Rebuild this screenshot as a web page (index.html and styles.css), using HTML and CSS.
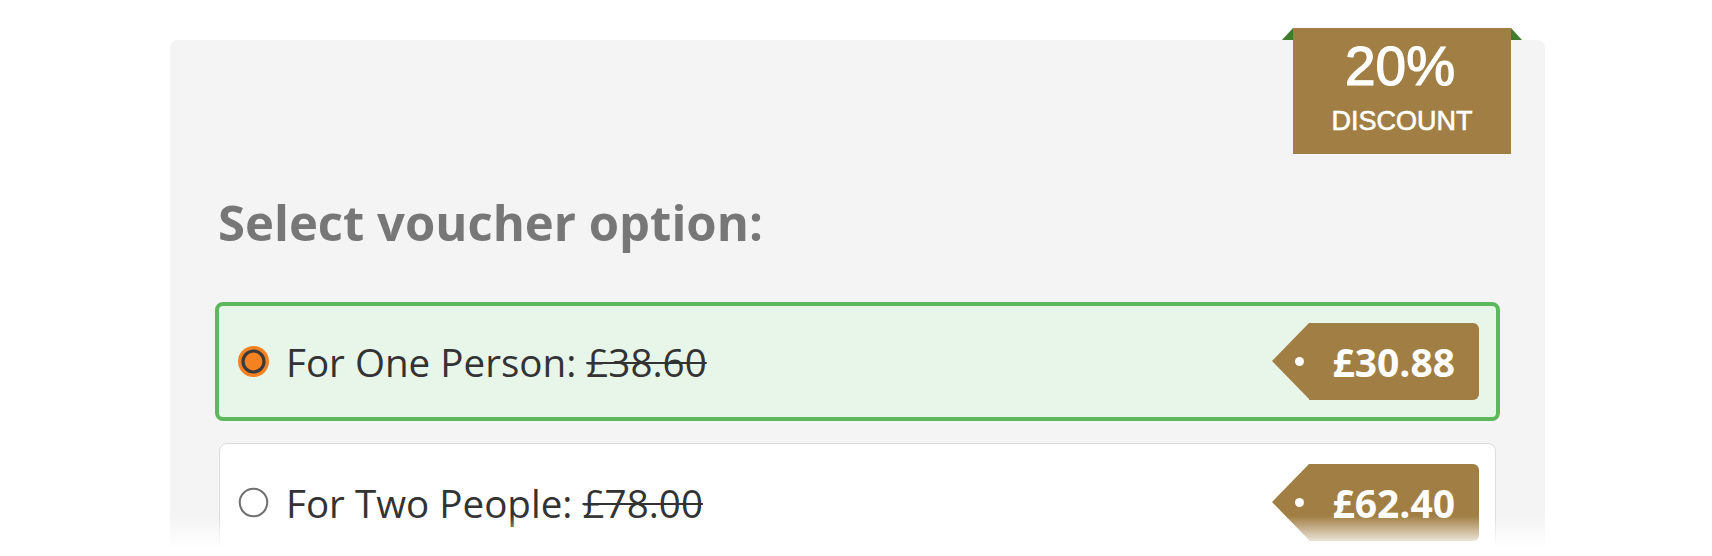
FILE: index.html
```html
<!DOCTYPE html>
<html>
<head>
<meta charset="utf-8">
<link rel="stylesheet" href="styles.css">
</head>
<body>
<div class="page">
  <div class="card">
    <div class="badge">
      <span class="badge-pct">20%</span>
      <span class="badge-label">DISCOUNT</span>
    </div>
    <h2 class="heading">Select voucher option:</h2>
    <div class="options">
      <div class="option selected">
        <svg class="radio" width="31" height="31" viewBox="0 0 31 31">
          <circle cx="15.5" cy="15.5" r="15.5" fill="#f58220"/>
          <circle cx="15.5" cy="15.5" r="10.5" fill="#f58220" stroke="#3a3a3a" stroke-width="3.2"/>
        </svg>
        <span class="label">For One Person: <s>£38.60</s></span>
        <span class="tag">£30.88</span>
      </div>
      <div class="option">
        <svg class="radio" width="31" height="31" viewBox="0 0 31 31">
          <circle cx="15.5" cy="15.5" r="13.8" fill="#fff" stroke="#707070" stroke-width="2"/>
        </svg>
        <span class="label">For Two People: <s>£78.00</s></span>
        <span class="tag">£62.40</span>
      </div>
    </div>
  </div>
  <div class="fade"></div>
</div>
</body>
</html>
```

FILE: styles.css
```css
html, body {
  margin: 0;
  padding: 0;
  background: #ffffff;
}

body {
  height: 556px;
  overflow: hidden;
}

.page {
  position: relative;
  height: 556px;
  padding: 40px 0 0 170px;
  box-sizing: border-box;
}

.card {
  position: relative;
  width: 1375px;
  height: 640px;
  background: #f4f4f4;
  border-radius: 8px;
  padding: 152px 45px 0 45px;
  box-sizing: border-box;
  font-family: "Open Sans", "DejaVu Sans", sans-serif;
}

.badge {
  position: absolute;
  top: -12px;
  right: 34px;
  width: 218px;
  height: 126px;
  background: #a17f44;
  color: #ffffff;
  font-family: "Liberation Sans", Arial, sans-serif;
  display: flex;
  flex-direction: column;
  align-items: center;
}

.badge::before,
.badge::after {
  content: "";
  position: absolute;
  top: 0;
  width: 0;
  height: 0;
  border-bottom: 12px solid #3f7d2c;
}

.badge::before {
  left: -11px;
  border-left: 11px solid transparent;
}

.badge::after {
  right: -11px;
  border-right: 11px solid transparent;
}

.badge-pct {
  font-size: 55px;
  line-height: 55px;
  margin-top: 11px;
  margin-left: -4px;
  -webkit-text-stroke: 1.2px #ffffff;
}

.badge-label {
  font-size: 27px;
  line-height: 27px;
  margin-top: 14px;
  -webkit-text-stroke: 0.6px #ffffff;
}

.heading {
  margin: 0;
  padding-left: 3px;
  font-size: 49px;
  line-height: 60px;
  font-weight: 700;
  color: #777777;
}

.options {
  margin-top: 50px;
  display: flex;
  flex-direction: column;
  gap: 22px;
}

.option {
  display: flex;
  align-items: center;
  height: 119px;
  box-sizing: border-box;
  background: #ffffff;
  border: 1px solid #dcdcdc;
  border-radius: 8px;
  margin: 0 4px;
  padding: 0 16px 0 18px;
}

.option.selected {
  background: #e8f6ea;
  border: 4px solid #5cb85c;
  margin: 0;
  padding: 0 17px 0 19px;
}

.radio {
  flex: none;
  margin-right: 17px;
}

.label {
  flex: 1;
  font-size: 38.6px;
  color: #333333;
  white-space: nowrap;
}

.label s {
  text-decoration-thickness: 2px;
}

.tag {
  position: relative;
  flex: none;
  margin-left: 37px;
  height: 77px;
  display: flex;
  align-items: center;
  padding: 0 24px 0 23px;
  background: #a17f44;
  border-radius: 0 6px 6px 0;
  color: #ffffff;
  font-size: 39px;
  font-weight: 700;
}

.tag::before {
  content: "";
  position: absolute;
  left: -37px;
  top: 0;
  width: 0;
  height: 0;
  border-top: 38.5px solid transparent;
  border-bottom: 38.5px solid transparent;
  border-right: 37px solid #a17f44;
}

.tag::after {
  content: "";
  position: absolute;
  left: -14px;
  top: 34px;
  width: 9px;
  height: 9px;
  border-radius: 50%;
  background: #ffffff;
}

.fade {
  position: absolute;
  left: 0;
  right: 0;
  bottom: 0;
  height: 40px;
  background: linear-gradient(to bottom, rgba(255,255,255,0) 0%, #ffffff 80%);
}
```
